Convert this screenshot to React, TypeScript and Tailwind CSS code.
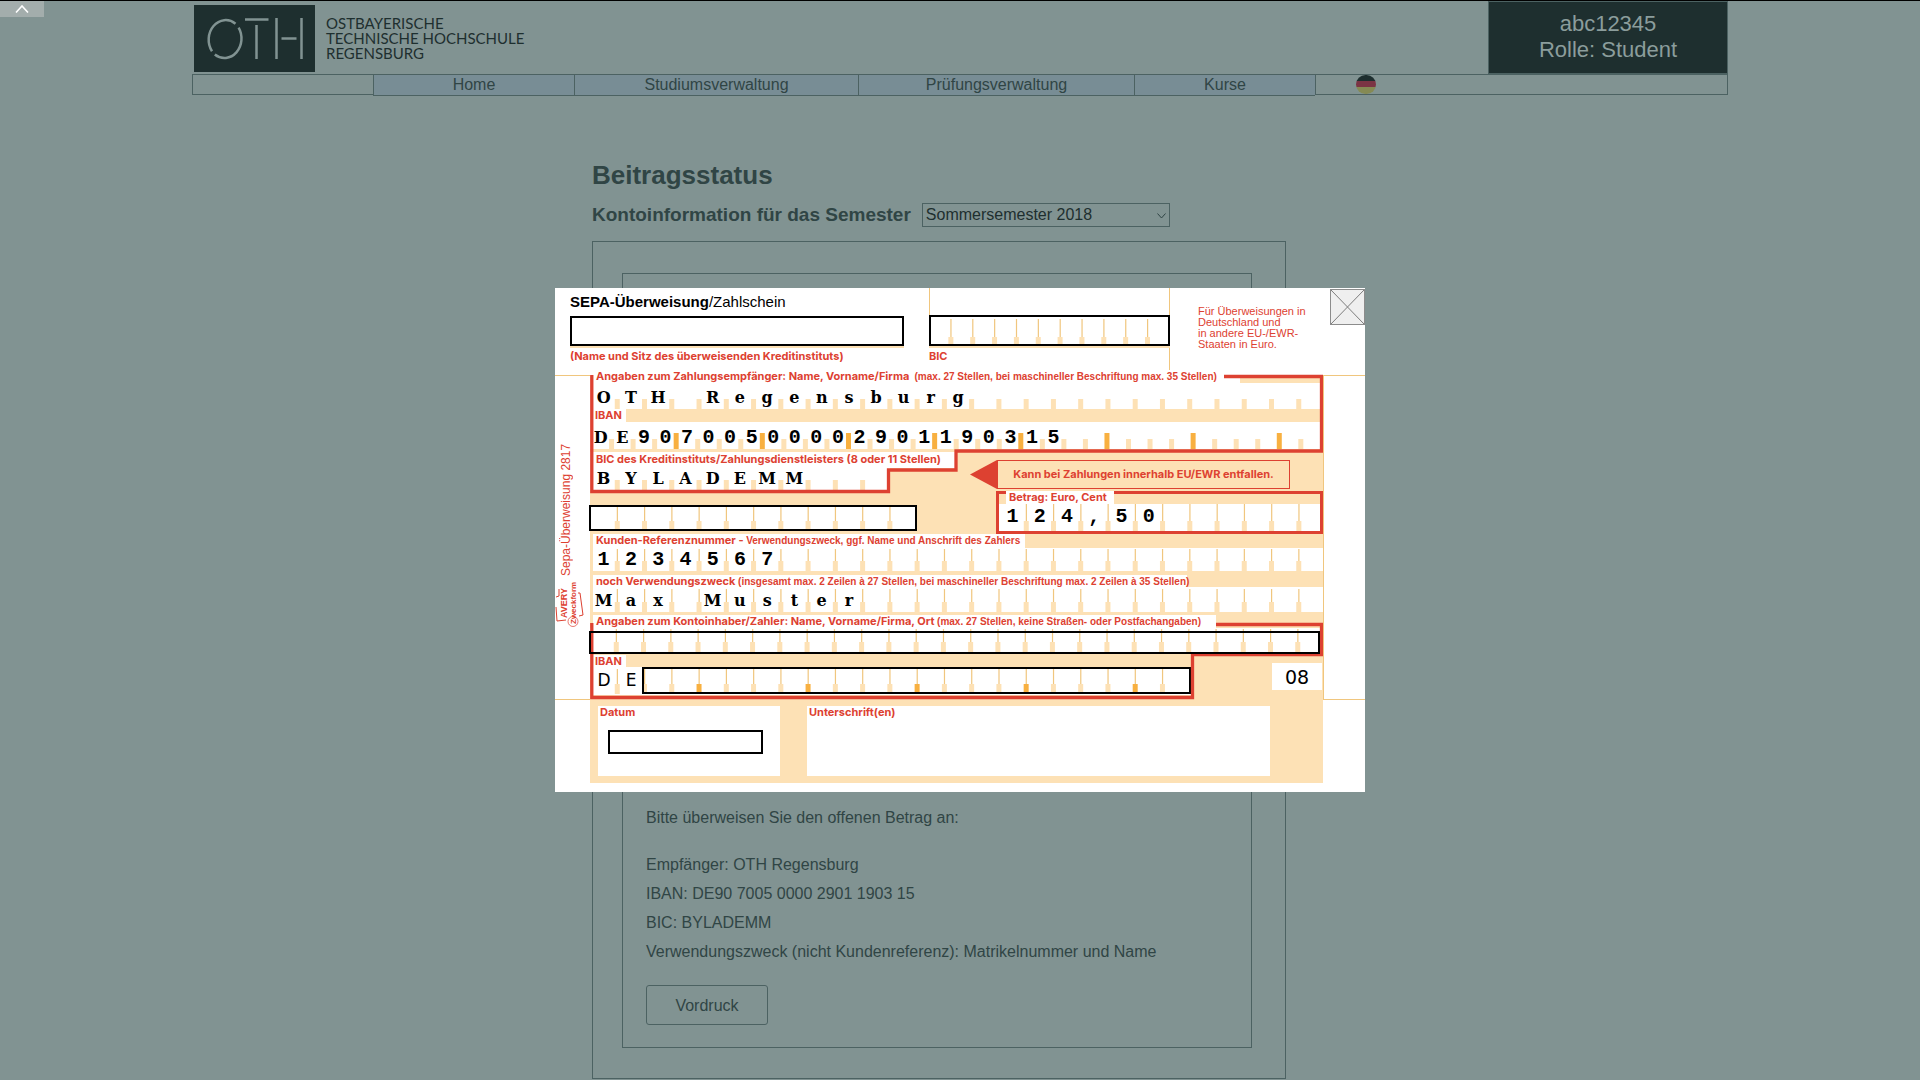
import React from "react";

const RED = "#dd4131";
const CREAM = "#fde1b5";
const ORANGE = "#f8b040";
const LINE = "#f0c67e";

type TicksProps = {
  count: number;
  pitch: number;
  height: number;
  block?: number;
  thinFrom?: number;
  strong?: number[];
  offset?: number;
};

/* Comb marks between the character cells */
function Ticks({ count, pitch, height, block = 10, thinFrom, strong = [], offset = 0 }: TicksProps) {
  return (
    <svg className="absolute top-0 left-0 h-full w-full" aria-hidden="true">
      {Array.from({ length: count }, (_, i) => {
        const x = offset + pitch * (i + 1);
        const bold = strong.includes(i + 1);
        const h = bold && thinFrom === undefined ? 16 : block;
        return (
          <g key={i}>
            {thinFrom !== undefined && (
              <rect x={x - 0.5} y={thinFrom} width="1.2" height={height - thinFrom} fill={LINE} />
            )}
            <rect x={x - 2.5} y={height - h} width="5" height={h} fill={bold ? ORANGE : CREAM} />
          </g>
        );
      })}
    </svg>
  );
}

function Char({ c }: { c: string }) {
  return /[0-9,]/.test(c) ? (
    <span className="text-center font-['Liberation_Mono',monospace] text-[20px]">{c}</span>
  ) : (
    <span className="text-center font-['DejaVu_Serif',serif] text-[16px]">{c}</span>
  );
}

function Label({ children, className = "h-[12px] leading-[12px]" }: { children: React.ReactNode; className?: string }) {
  return (
    <span className={"block whitespace-nowrap font-['Inter',sans-serif] text-[11px] font-bold text-[#dd4131] " + className}>
      {children}
    </span>
  );
}

function Small({ children }: { children: React.ReactNode }) {
  return <span className="font-['Liberation_Sans',sans-serif] text-[10px]">{children}</span>;
}

const cells27 = "relative grid w-[736px] grid-cols-[repeat(27,1fr)] items-center font-bold text-black leading-[20px]";
const blackBox = "relative block border-2 border-black bg-transparent px-1 text-sm outline-none";

function Slip() {
  return (
    <div
      role="dialog"
      aria-modal="true"
      aria-label="SEPA-Überweisung"
      className="relative w-[810px] bg-white pb-[9px] text-[#dd4131]"
    >
      <button
        type="button"
        aria-label="Schließen"
        className="absolute top-px right-0 h-[36px] w-[35px] border border-[#8c8c8c] bg-[#efefef]"
      >
        <svg className="h-full w-full" viewBox="0 0 33 34" preserveAspectRatio="none" aria-hidden="true">
          <path d="M0 0L33 34M33 0L0 34" stroke="#7c7c7c" strokeWidth="1" />
        </svg>
      </button>

      <header className="flex h-[82px] items-start pl-[15px]">
        <div className="w-[334px] pt-[5px]">
          <h2 className="whitespace-nowrap text-[15px] leading-[18px] text-black">
            <b>SEPA-Überweisung</b>/Zahlschein
          </h2>
          <input
            id="institut"
            className="mt-[5px] block h-[30px] w-full border-2 border-black bg-white px-1 text-sm text-black shadow-[0_2px_0_#fde1b5] outline-none"
          />
          <label
            htmlFor="institut"
            className="mt-1 block whitespace-nowrap font-['Inter',sans-serif] text-[11px] leading-[12px] font-bold"
          >
            (Name und Sitz des überweisenden Kreditinstituts)
          </label>
        </div>
        <div className="ml-[25px] w-[241px]">
          <div className="h-[27px] border-x border-[#f0c67e]" />
          <div className="relative h-[31px] bg-white shadow-[0_2px_0_#fde1b5]">
            <Ticks count={10} pitch={21.85} height={29} block={7} thinFrom={4} />
            <input id="bic-oben" className={blackBox + " h-full w-full"} />
          </div>
          <div className="h-[25px] border-r border-[#f0c67e] pt-1">
            <label htmlFor="bic-oben" className="block font-['Inter',sans-serif] text-[11px] leading-[12px] font-bold">
              BIC
            </label>
          </div>
        </div>
        <p className="mt-[18px] ml-[28px] whitespace-nowrap text-[11px] leading-[11px]">
          Für Überweisungen in
          <br />
          Deutschland und
          <br />
          in andere EU-/EWR-
          <br />
          Staaten in Euro.
        </p>
      </header>

      <div className="flex items-start">
        <aside className="mt-[5px] flex h-[325px] w-[35px] flex-col border-y border-[#f0c67e]">
          <span className="mt-[66px] ml-[3px] h-[134px] rotate-180 whitespace-nowrap text-[12px] leading-[16px] [writing-mode:vertical-rl]">
            Sepa-Überweisung 2817
          </span>
          <svg className="mt-[4px] h-[48px] w-[30px]" viewBox="0 0 30 48" aria-label="Avery Zweckform" role="img">
            <g fill={RED} fontFamily="Liberation Sans, sans-serif" fontWeight="bold">
              <text transform="translate(12 38) rotate(-90)" fontSize="9">
                AVERY
              </text>
              <text transform="translate(21 44) rotate(-90)" fontSize="8">
                Zweckform
              </text>
            </g>
            <path d="M1 17L4 16V9M1 27L2 41L11 40M23 13L25 13L28 35L24 36" stroke={RED} fill="none" />
            <circle cx="18" cy="41.500" r="5" stroke={RED} strokeWidth="0.700" fill="none" />
          </svg>
        </aside>

        <div className="relative flex w-[733px] flex-col bg-[#fde1b5]">
          {/* Payee */}
          <div className="h-[39px] bg-white">
            <Label className="ml-[6px] h-[12px] leading-[13px]">
              Angaben zum Zahlungsempfänger: Name, Vorname/Firma&nbsp; <Small>(max. 27 Stellen, bei maschineller Beschriftung max. 35 Stellen)</Small>
            </Label>
            <div className="relative h-[27px]">
              <Ticks count={26} pitch={27.26} height={27} />
              <div className={cells27 + " pt-[6px]"}>
                {"OTH Regensburg".split("").map((c, i) => (
                  <Char key={i} c={c} />
                ))}
              </div>
            </div>
          </div>
          <div className="h-[13px]">
            <Label className="h-[13px] w-[36px] bg-white pl-[5px] leading-[12px]">IBAN</Label>
          </div>
          <div className="relative h-[27px] bg-white">
            <Ticks count={33} pitch={21.54} height={27} strong={[4, 8, 12, 16, 20, 24, 28, 32]} />
            <div className="relative grid w-[733px] grid-cols-[repeat(34,1fr)] items-center pt-[6px] leading-[20px] font-bold text-black">
              {"DE90700500002901190315".split("").map((c, i) => (
                <Char key={i} c={c} />
              ))}
            </div>
          </div>

          <div className="mt-[3px] flex items-start justify-between">
            <div className="w-[367px]">
              <Label className="h-[16px] bg-white pl-[6px] leading-[14px]">
                BIC des Kreditinstituts/Zahlungsdienstleisters (8 oder 11 Stellen)
              </Label>
              <div className="relative h-[22px] w-[300px] bg-white">
                <Ticks count={10} pitch={27.26} height={22} />
                <div className={cells27 + " pt-px"}>
                  {"BYLADEMM".split("").map((c, i) => (
                    <Char key={i} c={c} />
                  ))}
                </div>
              </div>
              <div className="relative mt-[15px] -ml-px h-[26px] w-[328px] bg-white">
                <Ticks count={11} pitch={27.26} height={24} block={8} thinFrom={2} offset={1} />
                <input aria-label="Zusatzfeld" className={blackBox + " h-full w-full"} />
              </div>
            </div>

            <div className="w-[353px] pt-[8px]">
              <div className="flex h-[29px] w-[320px]">
                <svg className="h-full w-[27px]" viewBox="0 0 27 29" aria-hidden="true">
                  <path d="M0 14.500L27 0V29Z" fill={RED} />
                </svg>
                <p className="flex grow items-center justify-center border border-[#dd4131] font-['Inter',sans-serif] text-[11px] font-bold whitespace-nowrap">
                  Kann bei Zahlungen innerhalb EU/EWR entfallen.
                </p>
              </div>
              <div className="mt-[2px] ml-[26px] h-[43px] border-[3px] border-[#dd4131]">
                <Label className="relative -mt-[3px] ml-[7px] h-[13px] w-[108px] bg-white pl-[3px] leading-[12px]">
                  Betrag: Euro, Cent
                </Label>
                <div className="relative h-[27px] bg-white">
                  <Ticks count={11} pitch={27.26} height={27} thinFrom={0} />
                  <div className="relative -mr-[6px] grid grid-cols-[repeat(12,1fr)] pt-[3px] leading-[20px] font-bold text-black">
                    {"124,50".split("").map((c, i) => (
                      <Char key={i} c={c} />
                    ))}
                  </div>
                </div>
              </div>
            </div>
          </div>

          {/* Reference */}
          <div>
            <Label className="ml-[3px] h-[14px] w-[432px] bg-white pl-[3px] leading-[12px]">
              Kunden-Referenznummer - <Small>Verwendungszweck, ggf. Name und Anschrift des Zahlers</Small>
            </Label>
            <div className="relative ml-[3px] h-[23px] bg-white">
              <Ticks count={26} pitch={27.26} height={23} thinFrom={1} offset={-3} />
              <div className={cells27 + " -ml-[3px] pt-[2px]"}>
                {"1234567".split("").map((c, i) => (
                  <Char key={i} c={c} />
                ))}
              </div>
            </div>
          </div>
          <div className="mt-[4px]">
            <Label className="ml-[3px] h-[12px] w-[594px] bg-white pl-[3px] leading-[12px]">
              noch Verwendungszweck <Small>(insgesamt max. 2 Zeilen à 27 Stellen, bei maschineller Beschriftung max. 2 Zeilen à 35 Stellen)</Small>
            </Label>
            <div className="relative ml-[3px] h-[25px] bg-white">
              <Ticks count={26} pitch={27.26} height={25} thinFrom={2} offset={-3} />
              <div className={cells27 + " -ml-[3px] pt-[4px]"}>
                {"Max Muster".split("").map((c, i) => (
                  <Char key={i} c={c} />
                ))}
              </div>
            </div>
          </div>

          {/* Payer */}
          <div className="mt-[3px]">
            <Label className="ml-[3px] h-[13px] w-[623px] bg-white pl-[3px] leading-[13px]">
              Angaben zum Kontoinhaber/Zahler: Name, Vorname/Firma, Ort <Small>(max. 27 Stellen, keine Straßen- oder Postfachangaben)</Small>
            </Label>
            <div className="relative -ml-px h-[26px] bg-white pt-[3px]">
              <Ticks count={26} pitch={27.26} height={24} thinFrom={1} />
              <input aria-label="Kontoinhaber" className={blackBox + " z-10 h-[23px] w-[731px]"} />
            </div>
          </div>
          <div className="flex items-start justify-between">
            <div>
              <Label className="mt-px h-[12px] w-[36px] bg-white pl-[5px] leading-[12px]">IBAN</Label>
              <div className="relative ml-[3px] flex h-[28px] w-[598px] bg-white">
                <Ticks
                  count={21}
                  pitch={27.26}
                  height={27}
                  thinFrom={2}
                  offset={-3}
                  strong={[4, 8, 12, 16, 20]}
                />
                <span className="relative w-[22px] text-center font-['DejaVu_Sans',sans-serif] text-[17px] leading-[26px] text-black">
                  D
                </span>
                <span className="relative ml-[5px] w-[22px] text-center font-['DejaVu_Sans',sans-serif] text-[17px] leading-[26px] text-black">
                  E
                </span>
                <input aria-label="IBAN des Zahlers" className={blackBox + " h-[27px] grow"} />
              </div>
            </div>
            <span className="mt-[9px] mr-px h-[27px] w-[50px] bg-white text-center font-['DejaVu_Sans',sans-serif] text-[19px] leading-[28px] text-black">
              08
            </span>
          </div>

          <div className="mt-[11px] mb-[7px] flex h-[70px] gap-[27px] pl-[8px]">
            <div className="w-[182px] bg-white">
              <label htmlFor="datum" className="ml-[2px] block font-['Inter',sans-serif] text-[11px] leading-[12px] font-bold">
                Datum
              </label>
              <input
                id="datum"
                className="mt-[12px] ml-[10px] block h-[24px] w-[155px] border-2 border-black px-1 text-sm text-black outline-none"
              />
            </div>
            <div className="w-[463px] bg-white">
              <Label className="ml-[2px] leading-[12px]">Unterschrift(en)</Label>
            </div>
          </div>

          {/* Printed red outlines of the payee and payer areas */}
          <svg
            className="pointer-events-none absolute top-0 left-0 h-[413px] w-[733px]"
            viewBox="0 0 733 413"
            fill="none"
            stroke={RED}
            strokeWidth="3.300"
            aria-hidden="true"
          >
            <rect x="650" y="8" width="81" height="5" fill={CREAM} stroke="none" />
            <path d="M634 6.500H731.500V81H366V100H298.500V121.500H1.800V5" />
            <path d="M626 254.500H731.500V284.500H602.500V327.500H1.800V253" />
          </svg>
        </div>

        <div className="mt-[5px] h-[325px] grow border-y border-l border-[#f0c67e]" />
      </div>
    </div>
  );
}

function Logo() {
  return (
    <a href="#start" className="flex items-center gap-[11px] pt-[4px] pl-[2px] text-[#1e2f2f]">
      <svg className="h-[67px] w-[121px]" viewBox="0 0 121 67" aria-hidden="true">
        <rect width="121" height="67" fill="#1e2f2f" />
        <g fill="none" stroke="#819392" strokeWidth="2.500">
          <path d="M41.500 18.700A17 19.500 0 0 0 18 46.200" />
          <path d="M44.600 22.600A17 19.500 0 0 1 20.800 49.500" />
          <path d="M51 14.500H74.500M62.500 20V54M82.500 13V54M107.500 13V54M87.500 33.500H102.500" />
        </g>
      </svg>
      <span className="font-['Lato',sans-serif] text-[15px] leading-[15px]">
        OSTBAYERISCHE
        <br />
        TECHNISCHE HOCHSCHULE
        <br />
        REGENSBURG
      </span>
    </a>
  );
}

const navItem = "flex h-[22px] items-center justify-center border border-r-0 border-[#4c6262] bg-[#788d95]";

export default function App() {
  return (
    <div className="min-h-screen border-t border-black bg-[#819392] font-['Liberation_Sans',Arial,sans-serif] text-[16px] text-[#304545]">
      <button
        type="button"
        aria-label="Nach oben"
        className="absolute top-px left-0 flex h-[16px] w-[44px] items-center justify-center bg-[#a3adac]"
      >
        <svg className="h-[8px] w-[14px]" viewBox="0 0 14 8" fill="none" stroke="#ffffff" strokeWidth="1.600" aria-hidden="true">
          <path d="M1 7.500L7 1L13 7.500" />
        </svg>
      </button>

      <div className="mx-auto w-4/5">
        <header className="flex h-[73px] items-start justify-between">
          <Logo />
          <div className="flex h-[73px] w-[240px] flex-col items-center border border-[#4c6262] bg-[#1e2f2f] pt-[9px] text-[22px] leading-[26px] text-[#8b9d9c]">
            <span>abc12345</span>
            <span>Rolle: Student</span>
          </div>
        </header>

        <nav className="flex items-start leading-[20px]">
          <div className="h-[21px] w-[181px] border border-r-0 border-[#4c6262]" />
          <a href="#home" className={navItem + " w-[201px]"}>
            Home
          </a>
          <a href="#studium" className={navItem + " w-[284px]"}>
            Studiumsverwaltung
          </a>
          <a href="#pruefung" className={navItem + " w-[276px]"}>
            Prüfungsverwaltung
          </a>
          <a href="#kurse" className={navItem + " w-[181px]"}>
            Kurse
          </a>
          <div className="flex h-[21px] grow items-center border border-[#4c6262] pl-[40px]">
            <button type="button" aria-label="Sprache: Deutsch" className="flex h-[19px] w-5 flex-col overflow-hidden rounded-full">
              <span className="h-[6px] w-full bg-[#1e2f2f]" />
              <span className="h-[6px] w-full bg-[#7b3444]" />
              <span className="h-[7px] w-full bg-[#858a54]" />
            </button>
          </div>
        </nav>

        <main className="ml-[400px] max-w-[694px] pt-[63px]">
          <h1 className="text-[26px] leading-[32px] font-bold">Beitragsstatus</h1>
          <div className="mt-[12px] flex items-center gap-[11px]">
            <label htmlFor="semester" className="text-[19px] leading-[24px] font-bold whitespace-nowrap">
              Kontoinformation für das Semester
            </label>
            <span className="relative block">
              <select
                id="semester"
                className="block h-[24px] w-[248px] appearance-none border border-[#4c6262] bg-transparent px-[3px] text-[16px] leading-[20px] text-[#1e2f2f]"
              >
                <option>Sommersemester 2018</option>
              </select>
              <svg
                className="pointer-events-none absolute top-[10px] right-[4px] h-[6px] w-[9px]"
                viewBox="0 0 9 6"
                fill="none"
                stroke="#304545"
                aria-hidden="true"
              >
                <path d="M0.500 0.500L4.500 5L8.500 0.500" />
              </svg>
            </span>
          </div>

          <section className="mt-[14px] border border-[#4c6262] px-[29px] pt-[31px] pb-[30px]">
            <div className="mr-[4px] border border-[#4c6262] px-[23px] pt-[529px] pb-[22px] leading-[29px]">
              <p>Bitte überweisen Sie den offenen Betrag an:</p>
              <p className="mt-[18px]">Empfänger: OTH Regensburg</p>
              <p>IBAN: DE90 7005 0000 2901 1903 15</p>
              <p>BIC: BYLADEMM</p>
              <p>Verwendungszweck (nicht Kundenreferenz): Matrikelnummer und Name</p>
              <button type="button" className="mt-[19px] block h-[40px] w-[122px] rounded-[3px] border border-[#4c6262]">
                Vordruck
              </button>
            </div>
          </section>
        </main>
      </div>

      <div className="fixed inset-0 flex items-center justify-center">
        <Slip />
      </div>
    </div>
  );
}
